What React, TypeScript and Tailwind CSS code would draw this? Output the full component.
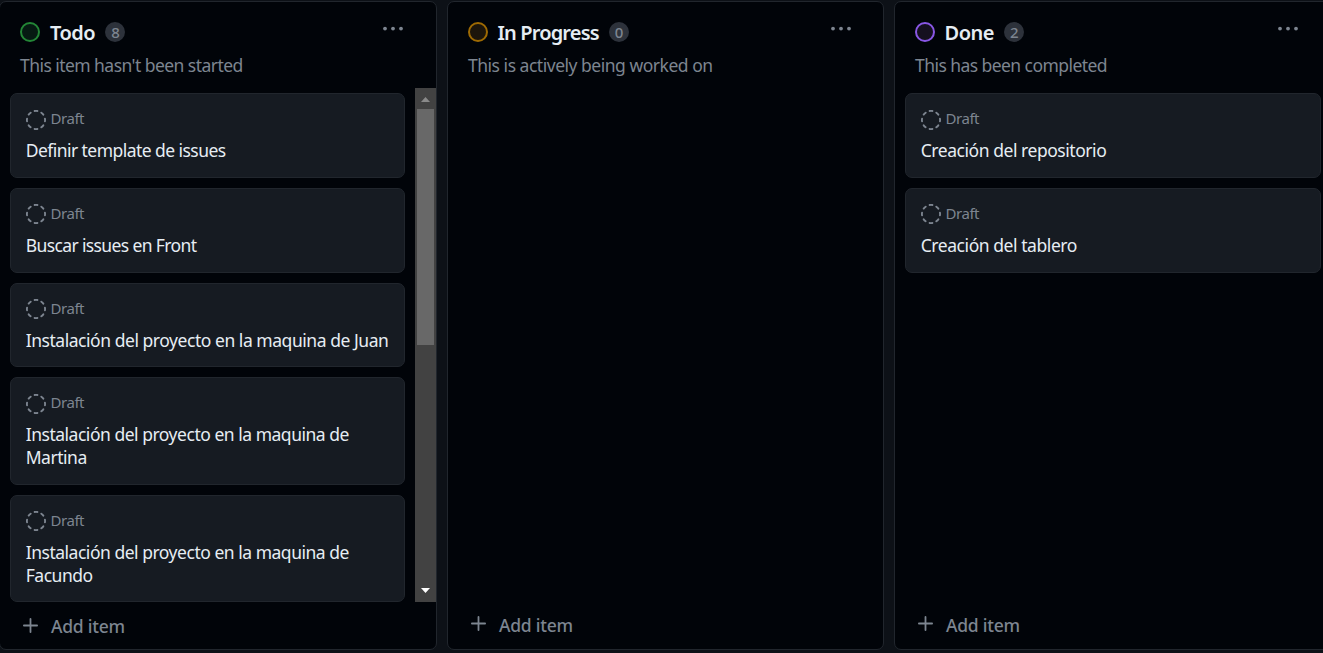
type CardData = { title: string; tracking: string; height: string; iconOffset: string };

const todoCards: CardData[] = [
  { title: 'Definir template de issues', tracking: 'tracking-[-0.55px]', height: 'h-[85px]', iconOffset: 'mt-px' },
  { title: 'Buscar issues en Front', tracking: 'tracking-[-0.62px]', height: 'h-[85px]', iconOffset: 'mt-0' },
  { title: 'Instalación del proyecto en la maquina de Juan', tracking: 'tracking-[-0.457px]', height: 'h-[84px]', iconOffset: 'mt-0' },
  { title: 'Instalación del proyecto en la maquina de\nMartina', tracking: 'tracking-[-0.48px]', height: 'h-[108px]', iconOffset: 'mt-px' },
  { title: 'Instalación del proyecto en la maquina de\nFacundo', tracking: 'tracking-[-0.48px]', height: 'h-[107px]', iconOffset: 'mt-0' },
];

const doneCards: CardData[] = [
  { title: 'Creación del repositorio', tracking: 'tracking-[-0.45px]', height: 'h-[85px]', iconOffset: 'mt-px' },
  { title: 'Creación del tablero', tracking: 'tracking-[-0.435px]', height: 'h-[85px]', iconOffset: 'mt-0' },
];

function DraftIcon({ offset }: { offset: string }) {
  return (
    <svg className={`size-5 shrink-0 ${offset}`} viewBox="0 0 16 16" fill="#7d8590" aria-hidden="true">
      <path d="M14.307 11.655a.75.75 0 0 1 .165 1.048 8.05 8.05 0 0 1-1.769 1.77.75.75 0 0 1-.883-1.214 6.552 6.552 0 0 0 1.44-1.439.75.75 0 0 1 1.047-.165Zm-2.652-9.962a.75.75 0 0 1 1.048-.165 8.05 8.05 0 0 1 1.77 1.769.75.75 0 0 1-1.214.883 6.552 6.552 0 0 0-1.439-1.44.75.75 0 0 1-.165-1.047ZM6.749.097a8.074 8.074 0 0 1 2.502 0 .75.75 0 1 1-.233 1.482 6.558 6.558 0 0 0-2.036 0A.751.751 0 0 1 6.749.097ZM.955 6.125a.75.75 0 0 1 .624.857 6.558 6.558 0 0 0 0 2.036.75.75 0 1 1-1.482.233 8.074 8.074 0 0 1 0-2.502.75.75 0 0 1 .858-.624Zm14.09 0a.75.75 0 0 1 .858.624c.13.829.13 1.673 0 2.502a.75.75 0 1 1-1.482-.233 6.558 6.558 0 0 0 0-2.036.75.75 0 0 1 .624-.857Zm-8.92 8.92a.75.75 0 0 1 .857-.624 6.558 6.558 0 0 0 2.036 0 .75.75 0 1 1 .233 1.482c-.829.13-1.673.13-2.502 0a.75.75 0 0 1-.624-.858Zm-4.432-3.39a.75.75 0 0 1 1.048.165 6.552 6.552 0 0 0 1.439 1.44.751.751 0 0 1-.883 1.212 8.05 8.05 0 0 1-1.77-1.769.75.75 0 0 1 .166-1.048Zm2.652-9.962A.75.75 0 0 1 4.18 2.741a6.556 6.556 0 0 0-1.44 1.439.751.751 0 0 1-1.212-.883 8.05 8.05 0 0 1 1.769-1.77.75.75 0 0 1 1.048.166Z" />
    </svg>
  );
}

function Card({ card }: { card: CardData }) {
  return (
    <li className={`${card.height} shrink-0 rounded-[7px] border border-[#21262d] bg-[#161b22] px-[15px] pt-[15px]`}>
      <div className="flex h-5 items-start gap-[4.5px]">
        <DraftIcon offset={card.iconOffset} />
        <span className="-mt-px text-[15px] leading-5 tracking-[-0.45px] text-[#7d8590]">Draft</span>
      </div>
      <p className={`-ml-[0.3px] mt-[10px] whitespace-pre text-[17.5px] leading-[23px] text-[#e6edf3] ${card.tracking}`}>
        {card.title}
      </p>
    </li>
  );
}

type ColumnHead = {
  name: string;
  nameTracking: string;
  count: number;
  text: string;
  textTracking: string;
  dot: string;
  menuOffset: string;
};

function Header({ head }: { head: ColumnHead }) {
  return (
    <header className="h-[86px] shrink-0 pl-[20px] pt-[20px]">
      <div className="flex h-[22px] items-start">
        <span className={`size-5 shrink-0 rounded-full border-2 ${head.dot}`} />
        <h2 className={`ml-[9.5px] whitespace-nowrap text-[20px] font-semibold leading-[22px] text-[#e6edf3] ${head.nameTracking}`}>
          {head.name}
        </h2>
        <span className="ml-[10px] flex h-5 min-w-5 items-center justify-center rounded-full bg-[#2d323b] px-[6px] text-[15px] font-medium leading-5 tracking-[-0.4px] text-[#7d8590]">
          {head.count}
        </span>
        <svg className={`ml-auto mt-[3px] h-[8px] w-[22px] ${head.menuOffset}`} viewBox="0 0 22 8" fill="#7d8590" aria-hidden="true">
          <circle cx="3" cy="3.6" r="1.9" />
          <circle cx="11" cy="3.6" r="1.9" />
          <circle cx="19" cy="3.6" r="1.9" />
        </svg>
      </div>
      <p className={`mt-[9px] whitespace-nowrap text-[17.5px] leading-6 text-[#7d8590] ${head.textTracking}`}>{head.text}</p>
    </header>
  );
}

function AddItem({ lowered = false }: { lowered?: boolean }) {
  return (
    <button className={`flex h-[47px] shrink-0 items-start pl-[23px] text-left ${lowered ? 'pt-[13px]' : 'pt-[12px]'}`}>
      <svg className={`size-[15px] shrink-0 ${lowered ? 'mt-[3px]' : 'mt-[2px]'}`} viewBox="0 0 15 15" stroke="#7d8590" strokeWidth="1.8" strokeLinecap="round" aria-hidden="true">
        <path d="M7.5 0.9V14.1M0.9 7.5H14.1" />
      </svg>
      <span className="ml-[13px] text-[17.5px] font-medium leading-[23px] tracking-[-0.25px] text-[#7d8590]">Add item</span>
    </button>
  );
}

function Scrollbar() {
  return (
    <div className="flex w-[21px] shrink-0 flex-col items-center bg-[#424242]">
      <svg className="h-[21px] w-[21px] shrink-0" viewBox="0 0 21 21" fill="#8a8a8a" aria-hidden="true">
        <path d="M6 14 10.5 9 15 14Z" />
      </svg>
      <div className="h-[236px] w-[17px] bg-[#686868]" />
      <svg className="mt-auto h-[21px] w-[21px] shrink-0" viewBox="0 0 21 21" fill="#ffffff" aria-hidden="true">
        <path d="M6 7 10.5 12 15 7Z" />
      </svg>
    </div>
  );
}

export default function App() {
  return (
    <main className="flex h-[653px] w-[1323px] gap-[10px] overflow-hidden bg-[#0d1117] pt-px font-['Noto_Sans',sans-serif]">
      <section className="-ml-px flex h-[649px] w-[438px] shrink-0 flex-col overflow-hidden rounded-[7px] border border-[#21262d] bg-[#010409]">
        <Header
          head={{
            name: 'Todo',
            nameTracking: 'pl-[0.5px] tracking-[-0.5px]',
            count: 8,
            text: "This item hasn't been started",
            textTracking: 'tracking-[-0.55px]',
            dot: 'border-[#238636] bg-[#061a12]',
            menuOffset: 'mr-[32px]',
          }}
        />
        <div className="flex h-[514px] shrink-0 justify-between">
          <ul className="flex w-[405px] flex-col gap-[10px] pl-[10px] pt-[5px]">
            {todoCards.map((c) => (
              <Card key={c.title} card={c} />
            ))}
          </ul>
          <Scrollbar />
        </div>
        <AddItem lowered />
      </section>
      <section className="flex h-[649px] w-[437px] shrink-0 flex-col rounded-[7px] border border-[#21262d] bg-[#010409]">
        <Header
          head={{
            name: 'In Progress',
            nameTracking: 'tracking-[-0.85px]',
            count: 0,
            text: 'This is actively being worked on',
            textTracking: 'tracking-[-0.48px]',
            dot: 'border-[#9e6a03] bg-[#1c150b]',
            menuOffset: 'mr-[31px]',
          }}
        />
        <div className="h-[514px] shrink-0" />
        <AddItem />
      </section>
      <section className="flex h-[649px] w-[438px] shrink-0 flex-col rounded-[7px] border border-[#21262d] bg-[#010409]">
        <Header
          head={{
            name: 'Done',
            nameTracking: 'tracking-[-0.5px]',
            count: 2,
            text: 'This has been completed',
            textTracking: 'tracking-[-0.56px]',
            dot: 'border-[#8957e5] bg-[#15101f]',
            menuOffset: 'mr-[32px]',
          }}
        />
        <ul className="flex h-[514px] w-[426px] shrink-0 flex-col gap-[10px] pl-[10px] pt-[5px]">
          {doneCards.map((c) => (
            <Card key={c.title} card={c} />
          ))}
        </ul>
        <AddItem />
      </section>
    </main>
  );
}
